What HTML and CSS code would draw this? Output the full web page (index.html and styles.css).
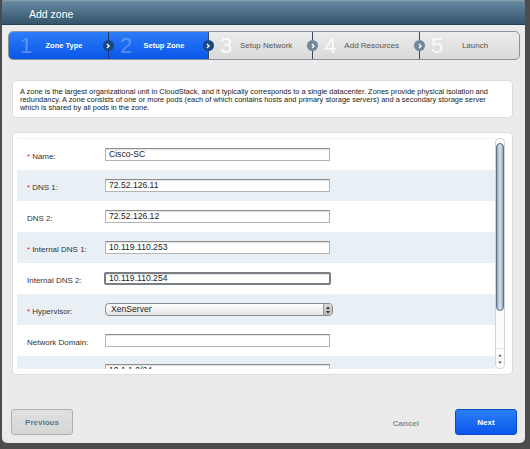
FILE: index.html
```html
<!DOCTYPE html>
<html>
<head>
<meta charset="utf-8">
<link rel="stylesheet" href="styles.css">
</head>
<body>
<div class="dialog">
  <div class="header">Add zone</div>

  <div class="steps">
    <div class="step active"><span class="num">1</span><span class="slabel">Zone Type</span><span class="chev"><svg viewBox="0 0 10 10" width="10" height="10"><path d="M4 3 L6 5 L4 7" fill="none" stroke="#fff" stroke-width="1.4"/></svg></span></div>
    <div class="step active"><span class="num">2</span><span class="slabel">Setup Zone</span><span class="chev"><svg viewBox="0 0 10 10" width="10" height="10"><path d="M4 3 L6 5 L4 7" fill="none" stroke="#fff" stroke-width="1.4"/></svg></span></div>
    <div class="step"><span class="num">3</span><span class="slabel">Setup Network</span><span class="chev grey"><svg viewBox="0 0 10 10" width="10" height="10"><path d="M4 3 L6 5 L4 7" fill="none" stroke="#fff" stroke-width="1.4"/></svg></span></div>
    <div class="step"><span class="num">4</span><span class="slabel">Add Resources</span><span class="chev grey"><svg viewBox="0 0 10 10" width="10" height="10"><path d="M4 3 L6 5 L4 7" fill="none" stroke="#fff" stroke-width="1.4"/></svg></span></div>
    <div class="step"><span class="num">5</span><span class="slabel">Launch</span></div>
  </div>

  <div class="desc">A zone is the largest organizational unit in CloudStack, and it typically corresponds to a single datacenter. Zones provide physical isolation and<br>redundancy. A zone consists of one or more pods (each of which contains hosts and primary storage servers) and a secondary storage server<br>which is shared by all pods in the zone.</div>

  <div class="formpanel">
    <div class="rows">
      <div class="row first"><label><span class="req">*</span>Name:</label><div class="input">Cisco-SC</div></div>
      <div class="row alt"><label><span class="req">*</span>DNS 1:</label><div class="input">72.52.126.11</div></div>
      <div class="row"><label>DNS 2:</label><div class="input">72.52.126.12</div></div>
      <div class="row alt"><label><span class="req">*</span>Internal DNS 1:</label><div class="input">10.119.110.253</div></div>
      <div class="row"><label>Internal DNS 2:</label><div class="input focus">10.119.110.254</div></div>
      <div class="row alt"><label><span class="req">*</span>Hypervisor:</label><div class="select"><span>XenServer</span><span class="stepper"><svg viewBox="0 0 8 12" width="8" height="12"><path d="M2 5 L4 2.5 L6 5 Z M2 7 L4 9.5 L6 7 Z" fill="#333"/></svg></span></div></div>
      <div class="row"><label>Network Domain:</label><div class="input"></div></div>
      <div class="row alt last"><label>Guest CIDR:</label><div class="input">10.1.1.0/24</div></div>
    </div>
    <div class="scrollbar">
      <div class="thumb"></div>
      <div class="arrows">
        <svg viewBox="0 0 10 20" width="10" height="20"><path d="M3 7 L5 4 L7 7 Z" fill="#444"/><path d="M3 13 L5 16 L7 13 Z" fill="#444"/><path d="M1 10 H9" stroke="#ddd" stroke-width="0.6"/></svg>
      </div>
    </div>
  </div>

  <div class="footer">
    <div class="btn prev">Previous</div>
    <div class="right">
      <div class="cancel">Cancel</div>
      <div class="btn next">Next</div>
    </div>
  </div>
</div>
</body>
</html>
```
FILE: styles.css
```css
* { box-sizing: border-box; }
html, body { margin: 0; padding: 0; }
body {
  width: 530px;
  height: 449px;
  background: #4c4c4c;
  font-family: "Liberation Sans", Arial, sans-serif;
  overflow: hidden;
}
.dialog {
  margin-left: 2px;
  width: 523px;
  height: 443px;
  background: #ebebeb;
  border-radius: 3px 3px 5px 5px;
  display: flex;
  flex-direction: column;
  overflow: hidden;
}
.header {
  height: 25px;
  flex: none;
  background: linear-gradient(#8ea3b1 0, #6488a0 2px, #34546b);
  color: #fff;
  font-size: 10.5px;
  line-height: 28px;
  padding-left: 27px;
  border-bottom: 1px solid #2a3f50;
}
.steps {
  margin: 6px 0 0 6px;
  width: 512px;
  height: 29px;
  flex: none;
  display: flex;
  border: 1px solid #8a939c;
  border-radius: 5px;
  overflow: hidden;
  background: linear-gradient(#ececec, #d9d9d9);
}
.step {
  flex: 1;
  position: relative;
  display: flex;
  align-items: center;
  padding-left: 11px;
  padding-right: 20px;
  color: #555;
  font-size: 8px;
}
.step + .step { border-left: 1px solid #3a4a5a; }
.step.active {
  background: linear-gradient(#2c7df7, #0a56ea);
  color: #fff;
  font-weight: bold;
  font-size: 7.5px;
}
.step.active + .step.active { border-left-color: #12356c; }
.num {
  width: 20px;
  flex: none;
  font-size: 22px;
  font-weight: normal;
  color: rgba(255,255,255,0.85);
  line-height: 1;
}
.step.active .num { color: rgba(255,255,255,0.28); }
.slabel {
  flex: 1;
  text-align: center;
  white-space: nowrap;
}
.chev {
  position: absolute;
  right: -6px;
  top: 8px;
  width: 11px;
  height: 11px;
  border-radius: 50%;
  background: #1a4683;
  z-index: 2;
  display: flex;
  align-items: center;
  justify-content: center;
}
.chev.grey { background: #72879b; }
.desc {
  margin: 20px 0 0 10px;
  width: 501px;
  height: 38px;
  flex: none;
  background: #fff;
  border: 1px solid #dcdcdc;
  border-radius: 4px;
  font-size: 7.45px;
  line-height: 8px;
  color: #222;
  padding: 7px 0 0 7px;
  white-space: nowrap;
}
.formpanel {
  margin: 14px 0 0 10px;
  width: 501px;
  height: 243px;
  flex: none;
  background: #fff;
  border: 1px solid #dcdcdc;
  border-radius: 4px;
  padding: 5px 7px 6px 4px;
  display: flex;
}
.rows {
  flex: 1;
  height: 231px;
  overflow: hidden;
  border-top: 1px solid #eef1f4;
}
.row {
  height: 31px;
  display: flex;
  align-items: center;
  padding-left: 10px;
}
.row.alt { background: #e9f0f5; }
.row.last { align-items: flex-start; padding-top: 8px; }
.row.last label { padding-top: 6px; }
.row label {
  width: 78px;
  flex: none;
  font-size: 8px;
  color: #333;
  padding-top: 4px;
}
.req {
  color: #e02020;
  margin-right: 2px;
}
.input {
  width: 225px;
  height: 13px;
  border: 1px solid #b4b4b4;
  border-top-color: #8e8e8e;
  background: #fff;
  font-size: 8.6px;
  line-height: 11px;
  padding-left: 3px;
  color: #222;
  box-shadow: inset 0 1px 1px rgba(0,0,0,0.12);
}
.input.focus {
  width: 227px;
  margin-left: -1px;
  border: 2px solid #7a7f86;
  border-radius: 2px;
  line-height: 9px;
  padding-left: 3px;
}
.select {
  width: 228px;
  height: 13px;
  border: 1px solid #8c8c8c;
  border-radius: 4px;
  background: linear-gradient(#ffffff, #e4e4e4);
  font-size: 8.6px;
  line-height: 11px;
  color: #222;
  display: flex;
  justify-content: space-between;
  padding-left: 5px;
  overflow: hidden;
}
.stepper {
  width: 9px;
  background: linear-gradient(#d8d8d8, #b8b8b8);
  border-left: 1px solid #999;
  display: flex;
  align-items: center;
  justify-content: center;
}
.scrollbar {
  width: 10px;
  flex: none;
  height: 231px;
  border: 1px solid #d6d6d6;
  border-radius: 4px;
  background: #fcfcfc;
  display: flex;
  flex-direction: column;
  justify-content: space-between;
  padding-top: 4px;
}
.thumb {
  height: 168px;
  border-radius: 4px;
  border: 1px solid #5f738a;
  background: linear-gradient(90deg, #8fa2b6, #dfe7ef 50%, #8fa2b6);
}
.arrows {
  height: 20px;
  display: flex;
  justify-content: center;
  border-top: 1px solid #e2e2e2;
}
.footer {
  margin-top: 34px;
  display: flex;
  justify-content: space-between;
  align-items: center;
  padding: 0 8px 0 9px;
}
.right {
  display: flex;
  align-items: center;
}
.btn {
  width: 62px;
  height: 26px;
  border-radius: 3px;
  font-size: 8px;
  font-weight: bold;
  display: flex;
  align-items: center;
  justify-content: center;
}
.prev {
  background: linear-gradient(#e0e0e0, #d6d6d6);
  border: 1px solid #a8b0b8;
  color: #5b7890;
}
.cancel {
  font-size: 8px;
  font-weight: bold;
  color: #8a8a8a;
  margin-right: 36px;
  padding-top: 2px;
}
.next {
  background: linear-gradient(#2b7ff7, #0a56ea);
  border: 1px solid #0b4cc4;
  color: #fff;
}
```
